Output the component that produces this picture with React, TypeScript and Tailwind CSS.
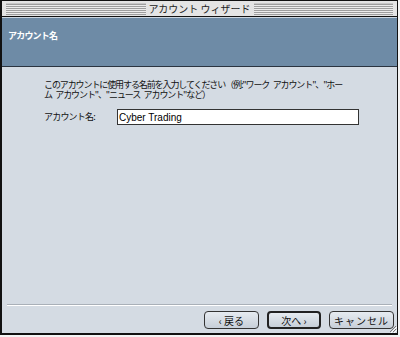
import React from "react";

const jp = { fontFamily: '"Noto Sans CJK JP", "Noto Sans", sans-serif' };

export default function App() {
  return (
    <div className="w-[400px] h-[337px] bg-[#f4f4f4] relative" style={jp}>
      <div className="w-[398px] h-[335px] flex flex-col border-l-2 border-r border-b-2 border-t border-[#111] bg-[#d4dbe3] relative">
        {/* Title bar */}
        <div className="h-[16px] bg-[#e4e4e4] border-b border-[#111] flex items-center px-[4px] shrink-0">
          <div className="flex-1 h-[12px] bg-[repeating-linear-gradient(to_bottom,#9e9e9e_0px,#9e9e9e_1px,#ececec_1px,#ececec_2px)] border-t border-[#c8c8c8]" />
          <div className="w-[108px] h-[14px] flex items-center justify-center text-[10px] leading-none text-[#222] whitespace-nowrap bg-[#e4e4e4]">
            アカウント ウィザード
          </div>
          <div className="flex-1 h-[12px] bg-[repeating-linear-gradient(to_bottom,#9e9e9e_0px,#9e9e9e_1px,#ececec_1px,#ececec_2px)] border-t border-[#c8c8c8]" />
        </div>
        {/* Header */}
        <div className="h-[50px] shrink-0 bg-[#6e8ba6] border-t border-[#c9d4df] border-b border-b-[#2a3440] flex items-start pl-[6px] pt-[13px]">
          <span className="text-white font-bold text-[9px] leading-[10px] tracking-[-0.8px]">アカウント名</span>
        </div>
        {/* Content */}
        <div className="flex-1 flex flex-col">
          <div className="pl-[42px] pr-[30px] pt-[13px] text-[9px] leading-[10px] tracking-[-1.1px] text-[#111] whitespace-nowrap">
            <div>{"このアカウントに使用する名前を入力してください（例:\"ワーク\u2002アカウント\"、\"ホー"}</div>
            <div>{"ム\u2002アカウント\"、\"ニュース\u2002アカウント\"など）"}</div>
          </div>
          <div className="flex items-center pl-[42px] mt-[9px]">
            <span className="w-[73px] text-[9px] tracking-[-0.8px] text-[#111]">アカウント名:</span>
            <div className="w-[242px] h-[16px] bg-white border border-[#333] flex items-center pl-[1px] text-[10px] text-black" style={{ fontFamily: '"Liberation Sans", Arial, sans-serif' }}>
              Cyber Trading
            </div>
          </div>
          <div className="flex-1" />
          <div className="mx-[5px] h-[2px] border-t border-[#a9b0b8] border-b border-b-white" />
          <div className="flex justify-end items-center gap-[8px] pr-[3px] pt-[5px] pb-[4px]">
            <div className="w-[55px] h-[18px] rounded-[4px] border border-[#333] bg-[linear-gradient(#e6ebf0,#c7cfd8)] flex items-center justify-center text-[10px] text-[#111]">
              ‹ 戻る
            </div>
            <div className="w-[54px] h-[18px] rounded-[4px] border-2 border-[#222] bg-[linear-gradient(#e6ebf0,#c7cfd8)] flex items-center justify-center text-[10px] text-[#111]">
              次へ ›
            </div>
            <div className="w-[65px] h-[18px] rounded-[4px] border border-[#333] bg-[linear-gradient(#e6ebf0,#c7cfd8)] flex items-center justify-center text-[10px] text-[#111] tracking-[1px]">
              キャンセル
            </div>
          </div>
        </div>
        <svg className="absolute right-0 bottom-0" width="9" height="9" viewBox="0 0 9 9">
          <path d="M8 2 L2 8 M8 5 L5 8" stroke="#777" strokeWidth="1" />
          <path d="M9 3 L3 9 M9 6 L6 9" stroke="#fff" strokeWidth="1" />
        </svg>
      </div>
    </div>
  );
}
